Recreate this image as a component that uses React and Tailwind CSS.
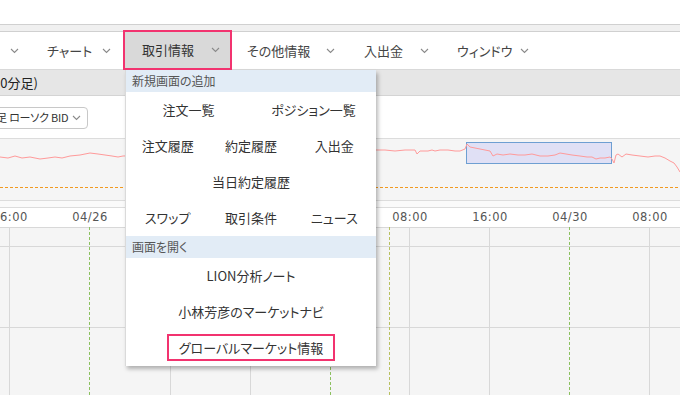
import React from "react";

const Chevron = () => (
  <svg width="9" height="6" viewBox="0 0 9 6" className="shrink-0">
    <polyline points="1,1 4.5,4.5 8,1" fill="none" stroke="#8a8a8a" strokeWidth="1.1" />
  </svg>
);

const NavItem = ({ label, w, pl, pr }) => (
  <div className={`flex items-center justify-between h-full shrink-0 whitespace-nowrap ${w} ${pl} ${pr}`}>
    <span>{label}</span>
    <Chevron />
  </div>
);

const linePts = [
  [0, 157], [8, 158], [15, 156], [22, 158], [30, 157], [40, 159], [48, 158], [55, 157], [62, 158], [70, 156], [80, 155], [90, 153], [98, 154], [105, 155], [112, 156], [118, 157], [123, 156],
  [376, 150], [385, 150], [395, 151], [405, 150], [415, 150], [417, 154], [420, 151], [428, 151], [432, 150], [435, 151], [440, 150], [448, 150], [455, 151], [460, 151], [465, 149],
  [467, 144], [470, 147], [475, 148], [480, 149], [485, 150], [490, 151], [493, 156], [497, 154], [503, 155], [510, 154], [518, 155], [525, 155], [532, 154], [540, 156], [548, 156], [555, 155], [560, 153], [566, 154], [572, 155], [580, 156], [587, 157], [592, 157], [596, 159], [600, 158], [605, 158], [610, 157], [612, 159], [614, 163], [616, 155], [618, 154], [622, 157], [626, 154], [632, 155], [640, 156], [648, 157], [655, 156], [660, 156], [665, 158], [670, 161], [674, 163], [677, 167], [680, 172],
];

export default function App() {
  return (
    <div className="relative w-[680px] h-[395px] overflow-hidden bg-white text-[#333] font-['Noto_Sans_CJK_JP','Noto_Sans',sans-serif] [font-feature-settings:'palt']">
      <div className="h-[24px] bg-white" />
      <div className="h-[8px] bg-[#f0f0f0] border-t border-b border-[#d0d0d0]" />
      <nav className="flex h-[38px] border-b border-[#d9d9d9] text-[13px] text-[#444]">
        <NavItem label="" w="w-[30px]" pl="pl-0" pr="pr-[11px]" />
        <NavItem label="チャート" w="w-[93px]" pl="pl-[17px]" pr="pr-[12px]" />
        <div className="relative z-10 -mt-[2px] h-[40px] w-[109px] shrink-0 flex items-center justify-between pl-[17px] pr-[10px] bg-[#d9d9d9] border-2 border-[#f2336f] text-[#333]">
          <span>取引情報</span>
          <Chevron />
        </div>
        <NavItem label="その他情報" w="w-[115px]" pl="pl-[15px]" pr="pr-[12px]" />
        <NavItem label="入出金" w="w-[94px]" pl="pl-[17px]" pr="pr-[12px]" />
        <NavItem label="ウィンドウ" w="w-[100px]" pl="pl-[16px]" pr="pr-[12px]" />
      </nav>
      <div className="h-[26px] bg-[#e6e6e6] border-b border-[#d4d4d4] flex items-center text-[13px] text-[#222] whitespace-nowrap">
        <span className="-ml-[7px]">10分足)</span>
      </div>
      <div className="h-[42px] flex items-center">
        <div className="-ml-[5px] mt-[1px] h-[22px] w-[93px] shrink-0 rounded-[4px] border border-[#c8c8c8] flex items-center justify-between pr-[6px] text-[11px] tracking-[-0.2px] text-[#333] whitespace-nowrap">
          <span>足 ローソク BID</span>
          <Chevron />
        </div>
      </div>
      <svg width="680" height="69" className="block">
        <rect x="0" y="0" width="680" height="62" fill="#f5f5f5" />
        <line x1="0" y1="0.5" x2="680" y2="0.5" stroke="#dcdcdc" />
        <line x1="0" y1="62.5" x2="680" y2="62.5" stroke="#dcdcdc" />
        <rect x="0" y="63" width="680" height="6" fill="#fafafa" />
        <line x1="0" y1="49.5" x2="680" y2="49.5" stroke="#f29a1f" strokeWidth="1.2" strokeDasharray="3,2" />
        <rect x="466.5" y="4.5" width="145" height="21" fill="#dcdcf5" fillOpacity="0.85" stroke="#6e9fd2" />
        <polyline points={linePts.map(([x, y]) => `${x},${y - 138}`).join(" ")} fill="none" stroke="#ff9a9a" strokeWidth="1" />
      </svg>
      <div className="relative h-[20px] border-t border-[#dcdcdc] bg-white text-[#555] font-['DejaVu_Sans','Noto_Sans',sans-serif] whitespace-nowrap">
        {[
          ["16:00", 10],
          ["04/26", 90],
          ["08:00", 410],
          ["16:00", 490],
          ["04/30", 570],
          ["08:00", 650],
        ].map(([t, x], i) => (
          <span key={i} className="absolute top-[1px] -translate-x-1/2 tracking-[0.5px] text-[11.5px]" style={{ left: x }}>
            {t}
          </span>
        ))}
      </div>
      <svg width="680" height="168" className="block">
        <rect x="0" y="0" width="680" height="168" fill="#f5f5f5" />
        <line x1="0" y1="0.5" x2="680" y2="0.5" stroke="#d8d8d8" />
        <line x1="0" y1="19.5" x2="680" y2="19.5" stroke="#d8d8d8" />
        <line x1="0" y1="100.5" x2="680" y2="100.5" stroke="#d8d8d8" />
        {[9, 170, 250, 409, 489, 649].map((x) => (
          <line key={x} x1={x + 0.5} y1="0" x2={x + 0.5} y2="168" stroke="#d8d8d8" />
        ))}
        {[89, 330, 569].map((x) => (
          <line key={x} x1={x + 0.5} y1="0" x2={x + 0.5} y2="168" stroke="#8cc060" strokeDasharray="3,2" />
        ))}
        <line x1="389.5" y1="0" x2="389.5" y2="168" stroke="#b8c060" strokeDasharray="3,2" />
      </svg>

      {/* Dropdown menu */}
      <div className="absolute left-[125px] top-[70px] w-[251px] h-[296px] bg-white border-l border-[#dadada] shadow-[2px_3px_4px_rgba(0,0,0,0.28)] text-[13px] text-[#333] whitespace-nowrap">
        <div className="h-[22px] bg-[#e2ecf6] flex items-center pl-[6px] text-[12px] text-[#555]">新規画面の追加</div>
        <div className="grid grid-cols-2 h-[36px] items-center text-center">
          <span>注文一覧</span>
          <span>ポジション一覧</span>
        </div>
        <div className="grid grid-cols-3 h-[36px] items-center text-center">
          <span>注文履歴</span>
          <span>約定履歴</span>
          <span>入出金</span>
        </div>
        <div className="h-[36px] flex items-center justify-center">当日約定履歴</div>
        <div className="grid grid-cols-3 h-[36px] items-center text-center">
          <span>スワップ</span>
          <span>取引条件</span>
          <span>ニュース</span>
        </div>
        <div className="h-[22px] bg-[#e2ecf6] flex items-center pl-[6px] text-[12px] text-[#555]">画面を開く</div>
        <div className="h-[36px] flex items-center justify-center">LION分析ノート</div>
        <div className="h-[35px] flex items-center justify-center">小林芳彦のマーケットナビ</div>
        <div className="flex justify-center pt-[5px]">
          <div className="w-[168px] h-[27px] border-2 border-[#f2336f] flex items-center justify-center">グローバルマーケット情報</div>
        </div>
      </div>
    </div>
  );
}
